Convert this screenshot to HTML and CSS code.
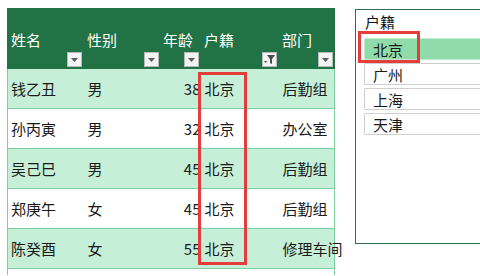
FILE: index.html
```html
<!DOCTYPE html>
<html lang="zh">
<head>
    <meta charset="UTF-8">
    <title>户籍筛选</title>
    <link rel="stylesheet" href="styles.css">
</head>
<body>
    <div class="sheet">
        <table class="grid">
            <colgroup>
                <col class="c-name"><col class="c-sex"><col class="c-age"><col class="c-home"><col class="c-dept">
            </colgroup>
            <thead>
                <tr>
                    <th><div class="label">姓名</div><div class="drop"><span class="btn"><svg width="7" height="4" viewBox="0 0 7 4"><path d="M0 0H7L3.5 4Z" fill="#5a5a5a"/></svg></span></div></th>
                    <th><div class="label">性别</div><div class="drop"><span class="btn"><svg width="7" height="4" viewBox="0 0 7 4"><path d="M0 0H7L3.5 4Z" fill="#5a5a5a"/></svg></span></div></th>
                    <th class="num"><div class="label">年龄</div><div class="drop"><span class="btn"><svg width="7" height="4" viewBox="0 0 7 4"><path d="M0 0H7L3.5 4Z" fill="#5a5a5a"/></svg></span></div></th>
                    <th><div class="label">户籍</div><div class="drop"><span class="btn"><svg width="11" height="9" viewBox="0 0 11 9"><path d="M3 0H11L8 4V9L6 8V4Z" fill="#4a4a4a"/><path d="M0 6H3L1.5 8Z" fill="#4a4a4a"/></svg></span></div></th>
                    <th><div class="label">部门</div><div class="drop"><span class="btn"><svg width="7" height="4" viewBox="0 0 7 4"><path d="M0 0H7L3.5 4Z" fill="#5a5a5a"/></svg></span></div></th>
                </tr>
            </thead>
            <tbody>
                <tr class="band"><td>钱乙丑</td><td>男</td><td class="num">38</td><td>北京</td><td>后勤组</td></tr>
                <tr><td>孙丙寅</td><td>男</td><td class="num">32</td><td>北京</td><td>办公室</td></tr>
                <tr class="band"><td>吴己巳</td><td>男</td><td class="num">45</td><td>北京</td><td>后勤组</td></tr>
                <tr><td>郑庚午</td><td>女</td><td class="num">45</td><td>北京</td><td>后勤组</td></tr>
                <tr class="band"><td>陈癸酉</td><td>女</td><td class="num">55</td><td>北京</td><td>修理车间</td></tr>
                <tr class="blank"><td></td><td></td><td></td><td></td><td></td></tr>
            </tbody>
        </table>
        <div class="mark mark-col"></div>
    </div>

    <div class="slicer">
        <div class="slicer-title">户籍</div>
        <div class="slicer-item picked">北京</div>
        <div class="slicer-item">广州</div>
        <div class="slicer-item">上海</div>
        <div class="slicer-item">天津</div>
        <div class="mark mark-item"></div>
    </div>
</body>
</html>
```

FILE: styles.css
```css
html, body {
    margin: 0;
    height: 100%;
    overflow: hidden;
    background: #fff;
}

body {
    display: flex;
    align-items: flex-start;
    padding: 8px 0 0 7px;
    box-sizing: border-box;
    font-family: "Noto Sans CJK SC", "DejaVu Sans", sans-serif;
    font-size: 15px;
    color: #1a1a1a;
}

.sheet {
    position: relative;
}

.grid {
    border-collapse: collapse;
    table-layout: fixed;
    width: 327px;
}

.c-name { width: 76px; }
.c-sex { width: 77px; }
.c-age { width: 40px; }
.c-home { width: 78px; }
.c-dept { width: 56px; }

.grid th {
    background: #217346;
    color: #fff;
    font-weight: normal;
    text-align: left;
    vertical-align: top;
    height: 61px;
    padding: 0;
    border-left: 1px solid #217346;
    border-right: 1px solid #217346;
}

.grid th .label {
    padding: 21px 0 0 3px;
    line-height: 22px;
    height: 22px;
    white-space: nowrap;
}

.grid th.num .label {
    text-align: right;
    padding-left: 0;
    padding-right: 7px;
}

.grid th .drop {
    display: flex;
    justify-content: flex-end;
    padding: 1px 1px 0 0;
}

.btn {
    width: 13px;
    height: 13px;
    background: #f3f3f3;
    border: 1px solid #b8b8b8;
    display: flex;
    align-items: center;
    justify-content: center;
}

.grid td {
    height: 39px;
    padding: 0 0 0 4px;
    white-space: nowrap;
    overflow: visible;
    border-bottom: 1px solid #7ccfa0;
    line-height: 20px;
}

.grid td:first-child {
    padding-left: 3px;
    border-left: 1px solid #7ccfa0;
}

.grid td:last-child {
    border-right: 1px solid #7ccfa0;
}

.grid td.num {
    text-align: right;
    padding: 0;
}

.grid tr.band td {
    background: #c6efd8;
}

.grid tr.blank td {
    height: 6px;
    border-bottom: none;
}

.mark {
    position: absolute;
    border: 3px solid #e53c3c;
    box-sizing: border-box;
}

.mark-col {
    left: 191px;
    top: 64px;
    width: 49px;
    height: 193px;
}

.slicer {
    position: relative;
    margin: 1px 0 0 20px;
    width: 126px;
    height: 235px;
    flex-shrink: 0;
    border: 1px solid #2f6d4c;
    border-right: none;
    box-sizing: border-box;
    padding: 0 0 0 8px;
}

.slicer-title {
    height: 28px;
    line-height: 24px;
    color: #111;
    padding-left: 1px;
}

.slicer-item {
    height: 22px;
    line-height: 21px;
    margin-bottom: 3px;
    border: 1px solid #cfcfcf;
    border-right: none;
    border-radius: 2px 0 0 2px;
    box-sizing: border-box;
    padding-left: 8px;
    background: #fff;
}

.slicer-item.picked {
    background: #8fdcaa;
    border-color: #c4e8d0;
}

.mark-item {
    left: 2px;
    top: 21px;
    width: 62px;
    height: 32px;
}
```
